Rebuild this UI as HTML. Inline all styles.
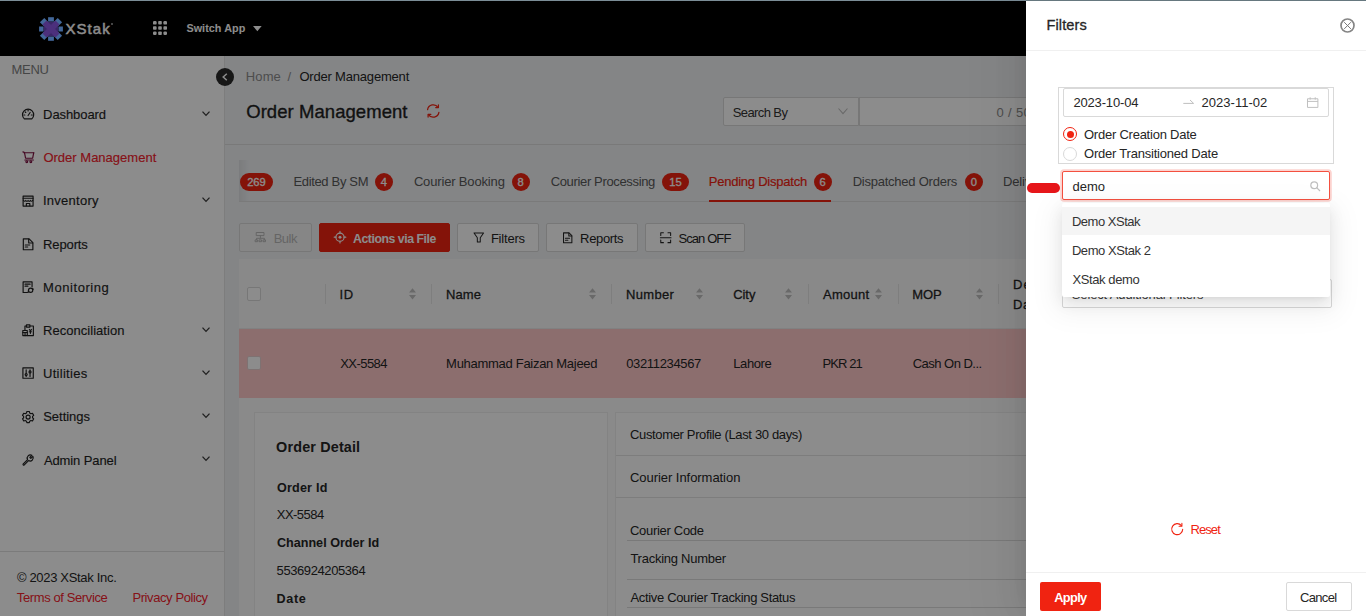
<!DOCTYPE html>
<html>
<head>
<meta charset="utf-8">
<title>Order Management</title>
<style>
*{box-sizing:border-box;margin:0;padding:0}
html,body{width:1366px;height:616px;overflow:hidden;background:#f0f2f5}
body{font-family:"Liberation Sans",sans-serif;font-size:13px;color:#262626;position:relative}
.abs{position:absolute}
.t{position:absolute;white-space:pre;line-height:16px}
svg{display:block;position:absolute;overflow:visible}
.badge{position:absolute;height:18px;border-radius:9px;background:#f02311;color:#fff;font-size:11.2px;line-height:18px;text-align:center;top:173px;-webkit-text-stroke:.3px #fff}
.btn{position:absolute;top:223.2px;height:28.7px;border:1px solid #d9d9d9;border-radius:2px;background:#fff}
</style>
</head>
<body>
<div class="abs" style="left:224px;top:56px;width:1142px;height:560px;background:#f0f2f5"></div>
<div class="t" style="left:245.7px;top:68.5px;font-size:13px;font-weight:400;color:#8c8c8c;letter-spacing:0.16px;">Home</div>
<div class="t" style="left:287.4px;top:68.5px;font-size:13px;font-weight:400;color:#8c8c8c;letter-spacing:1.30px;">/</div>
<div class="t" style="left:299.4px;top:68.5px;font-size:13px;font-weight:400;color:#262626;letter-spacing:-0.19px;">Order Management</div>
<div class="t" style="left:246.2px;top:103.6px;font-size:18.5px;font-weight:400;color:#1f1f1f;letter-spacing:0.06px;-webkit-text-stroke:.35px #1f1f1f;">Order Management</div>
<svg style="left:426px;top:104px" width="14.5" height="14" viewBox="0 0 14.5 14"><g stroke="#f02311" stroke-width="1.25" fill="none" stroke-linecap="round" stroke-linejoin="round"><path d="M1.6 5.6A5.7 5.7 0 0 1 12 3.4"/><path d="M12.4 .9V3.6H9.7"/><path d="M12.9 8.4A5.7 5.7 0 0 1 2.5 10.6"/><path d="M2.1 13.1V10.4H4.8"/></g></svg>
<div class="abs" style="left:723px;top:97px;width:135.6px;height:28.6px;background:#fff;border:1px solid #d9d9d9;border-radius:2px 0 0 2px"></div>
<div class="t" style="left:732.8px;top:104.8px;font-size:13px;font-weight:400;color:#333;letter-spacing:-0.61px;">Search By</div>
<svg style="left:838.4px;top:108px" width="10" height="6.4" viewBox="0 0 10 6.4"><path d="M.5 .5L5 5.6L9.5 .5" stroke="#bfbfbf" stroke-width="1.1" fill="none"/></svg>
<div class="abs" style="left:859px;top:97px;width:200px;height:28.6px;background:#fff;border:1px solid #d9d9d9"></div>
<div class="t" style="left:996.6px;top:104.8px;font-size:13px;font-weight:400;color:#8c8c8c;letter-spacing:0.31px;">0 / 50</div>
<div class="abs" style="left:225px;top:144px;width:1141px;height:1px;background:#dcdcdc"></div>
<div class="abs" style="left:239px;top:160px;width:1127px;height:41.8px;border-bottom:1px solid #dedede"></div>
<div class="abs" style="left:239px;top:160px;width:10px;height:41px;background:linear-gradient(90deg,rgba(0,0,0,.07),rgba(0,0,0,0))"></div>
<div class="t" style="left:293.4px;top:173.5px;font-size:13px;font-weight:400;color:#595959;letter-spacing:-0.33px;">Edited By SM</div>
<div class="t" style="left:413.9px;top:173.5px;font-size:13px;font-weight:400;color:#595959;letter-spacing:-0.16px;">Courier Booking</div>
<div class="t" style="left:550.7px;top:173.5px;font-size:13px;font-weight:400;color:#595959;letter-spacing:-0.35px;">Courier Processing</div>
<div class="t" style="left:708.7px;top:173.5px;font-size:13px;font-weight:400;color:#f02311;letter-spacing:-0.23px;-webkit-text-stroke:.2px;">Pending Dispatch</div>
<div class="t" style="left:852.7px;top:173.5px;font-size:13px;font-weight:400;color:#595959;letter-spacing:-0.24px;">Dispatched Orders</div>
<div class="t" style="left:1002.9px;top:173.5px;font-size:13px;font-weight:400;color:#595959;letter-spacing:-0.10px;">Delivered</div>
<div class="badge" style="left:240.4px;width:32.2px">269</div>
<div class="badge" style="left:374.7px;width:18.2px">4</div>
<div class="badge" style="left:511.6px;width:18.2px">8</div>
<div class="badge" style="left:662.4px;width:26.3px">15</div>
<div class="badge" style="left:813.6px;width:18.2px">6</div>
<div class="badge" style="left:964.7px;width:18.2px">0</div>
<div class="abs" style="left:709px;top:199.7px;width:122.4px;height:2px;background:#f02311"></div>
<div class="btn" style="left:239.3px;width:72.4px;background:#f5f5f5"></div>
<div class="btn" style="left:319.1px;width:131px;background:#f02311;border-color:#f02311"></div>
<div class="btn" style="left:457.3px;width:81.3px;"></div>
<div class="btn" style="left:546.4px;width:91.2px;"></div>
<div class="btn" style="left:645.2px;width:99.7px;"></div>
<svg style="left:255px;top:232px" width="11" height="10.2" viewBox="0 0 11 10.2"><g stroke="#b8b8b8" stroke-width="1" fill="none" stroke-linecap="round" stroke-linejoin="round"><path d="M1.6 .5H9V3.6H1.6Z"/><path d="M5.4 3.6V6.3M1.5 7.8V6.3H9.5V7.8"/><path d="M.5 7.9H2.6V9.7H.5ZM4.4 7.9H6.5V9.7H4.4ZM8.4 7.9H10.5V9.7H8.4Z"/></g></svg>
<div class="t" style="left:273.7px;top:231.1px;font-size:13px;font-weight:400;color:#b8b8b8;letter-spacing:-0.52px;">Bulk</div>
<svg style="left:334px;top:231.3px" width="12" height="12.4" viewBox="0 0 12 12.4"><g stroke="#fff" stroke-width="1.15" fill="none" stroke-linecap="round" stroke-linejoin="round"><circle cx="6" cy="6.2" r="4.1"/><path d="M6 .4V2.1M6 10.3V12M.2 6.2H1.9M10.1 6.2H11.8"/></g><circle cx="6" cy="6.2" r="1.5" fill="#fff"/></svg>
<div class="t" style="left:353.0px;top:231.3px;font-size:12.3px;font-weight:700;color:#fff;letter-spacing:-0.46px;">Actions via File</div>
<svg style="left:472.7px;top:232px" width="11.6" height="11" viewBox="0 0 12 12"><g stroke="#262626" stroke-width="1.1" fill="none" stroke-linecap="round" stroke-linejoin="round"><path d="M.8 1H11.2L7.6 6.2V11H4.4V6.2Z"/></g></svg>
<div class="t" style="left:490.9px;top:231.1px;font-size:13px;font-weight:400;color:#262626;letter-spacing:-0.21px;">Filters</div>
<svg style="left:561.6px;top:231.6px" width="11.4" height="11.6" viewBox="0 0 12 12"><g stroke="#262626" stroke-width="1.1" fill="none" stroke-linecap="round" stroke-linejoin="round"><path d="M1.6 .8H7.4L10.4 3.8V11.2H1.6Z"/><path d="M7.2 1V4H10.2"/><path d="M3.6 6.4H8M3.6 8.6H6.2"/></g></svg>
<div class="t" style="left:580.1px;top:231.1px;font-size:13px;font-weight:400;color:#262626;letter-spacing:-0.34px;">Reports</div>
<svg style="left:660px;top:231.6px" width="11.4" height="11.4" viewBox="0 0 12 12"><g stroke="#262626" stroke-width="1.1" fill="none" stroke-linecap="round" stroke-linejoin="round"><path d="M.8 3.6V.8H3.6M8.4 .8H11.2V3.6M11.2 8.4V11.2H8.4M3.6 11.2H.8V8.4M.4 6H11.6"/></g></svg>
<div class="t" style="left:678.4px;top:231.1px;font-size:13px;font-weight:400;color:#262626;letter-spacing:-0.90px;">Scan OFF</div>
<div class="abs" style="left:239px;top:259px;width:1127px;height:70px;background:#fafafa;border-bottom:1px solid #ececec"></div>
<div class="abs" style="left:239px;top:329px;width:1127px;height:69px;background:#ffc9c9"></div>
<div class="abs" style="left:239px;top:398px;width:1127px;height:218px;background:#fbfbfb"></div>
<div class="abs" style="left:247px;top:287px;width:14px;height:14px;background:#fff;border:1px solid #d9d9d9;border-radius:2px"></div>
<div class="abs" style="left:247px;top:356px;width:14px;height:14px;background:#fff;border:1px solid #e6d0d0;border-radius:2px"></div>
<div class="abs" style="left:325.0px;top:284px;width:1px;height:20px;background:#e6e6e6"></div>
<div class="abs" style="left:431.0px;top:284px;width:1px;height:20px;background:#e6e6e6"></div>
<div class="abs" style="left:611.0px;top:284px;width:1px;height:20px;background:#e6e6e6"></div>
<div class="abs" style="left:808.1px;top:284px;width:1px;height:20px;background:#e6e6e6"></div>
<div class="abs" style="left:897.9px;top:284px;width:1px;height:20px;background:#e6e6e6"></div>
<div class="abs" style="left:998.0px;top:284px;width:1px;height:20px;background:#e6e6e6"></div>
<div class="t" style="left:339.5px;top:286.7px;font-size:13px;font-weight:400;color:#262626;letter-spacing:0.53px;-webkit-text-stroke:.28px #262626;">ID</div>
<div class="t" style="left:446.1px;top:286.7px;font-size:13px;font-weight:400;color:#262626;letter-spacing:0.06px;-webkit-text-stroke:.28px #262626;">Name</div>
<div class="t" style="left:625.9px;top:286.7px;font-size:13px;font-weight:400;color:#262626;letter-spacing:0.35px;-webkit-text-stroke:.28px #262626;">Number</div>
<div class="t" style="left:733.2px;top:286.7px;font-size:13px;font-weight:400;color:#262626;letter-spacing:-0.05px;-webkit-text-stroke:.28px #262626;">City</div>
<div class="t" style="left:823.0px;top:286.7px;font-size:13px;font-weight:400;color:#262626;letter-spacing:0.27px;-webkit-text-stroke:.28px #262626;">Amount</div>
<div class="t" style="left:912.3px;top:286.7px;font-size:13px;font-weight:400;color:#262626;letter-spacing:-0.07px;-webkit-text-stroke:.28px #262626;">MOP</div>
<div class="t" style="left:1012.9px;top:276.5px;font-size:13px;font-weight:400;color:#262626;letter-spacing:1.10px;-webkit-text-stroke:.28px #262626;">De</div>
<div class="t" style="left:1012.9px;top:296.5px;font-size:13px;font-weight:400;color:#262626;letter-spacing:0.65px;-webkit-text-stroke:.28px #262626;">Da</div>
<svg style="left:409.2px;top:287.8px" width="7" height="11.6" viewBox="0 0 7 11.6"><path d="M0 4.6L3.5 .2L7 4.6Z M0 7L3.5 11.4L7 7Z" fill="#bfbfbf"/></svg>
<svg style="left:589.3px;top:287.8px" width="7" height="11.6" viewBox="0 0 7 11.6"><path d="M0 4.6L3.5 .2L7 4.6Z M0 7L3.5 11.4L7 7Z" fill="#bfbfbf"/></svg>
<svg style="left:696px;top:287.8px" width="7" height="11.6" viewBox="0 0 7 11.6"><path d="M0 4.6L3.5 .2L7 4.6Z M0 7L3.5 11.4L7 7Z" fill="#bfbfbf"/></svg>
<svg style="left:785.2px;top:287.8px" width="7" height="11.6" viewBox="0 0 7 11.6"><path d="M0 4.6L3.5 .2L7 4.6Z M0 7L3.5 11.4L7 7Z" fill="#bfbfbf"/></svg>
<svg style="left:875.4px;top:287.8px" width="7" height="11.6" viewBox="0 0 7 11.6"><path d="M0 4.6L3.5 .2L7 4.6Z M0 7L3.5 11.4L7 7Z" fill="#bfbfbf"/></svg>
<svg style="left:976.4px;top:287.8px" width="7" height="11.6" viewBox="0 0 7 11.6"><path d="M0 4.6L3.5 .2L7 4.6Z M0 7L3.5 11.4L7 7Z" fill="#bfbfbf"/></svg>
<div class="t" style="left:340.2px;top:355.5px;font-size:13px;font-weight:400;color:#262626;letter-spacing:-0.54px;">XX-5584</div>
<div class="t" style="left:446.1px;top:355.5px;font-size:13px;font-weight:400;color:#262626;letter-spacing:-0.29px;">Muhammad Faizan Majeed</div>
<div class="t" style="left:626.2px;top:355.5px;font-size:13px;font-weight:400;color:#262626;letter-spacing:-0.34px;">03211234567</div>
<div class="t" style="left:733.3px;top:355.5px;font-size:13px;font-weight:400;color:#262626;letter-spacing:-0.41px;">Lahore</div>
<div class="t" style="left:822.4px;top:355.5px;font-size:13px;font-weight:400;color:#262626;letter-spacing:-0.90px;">PKR 21</div>
<div class="t" style="left:912.7px;top:355.5px;font-size:13px;font-weight:400;color:#262626;letter-spacing:-0.52px;">Cash On D...</div>
<div class="abs" style="left:254px;top:412px;width:354px;height:220px;background:#fff;border:1px solid #efefef"></div>
<div class="abs" style="left:615px;top:412px;width:760px;height:220px;background:#fff;border:1px solid #efefef"></div>
<div class="t" style="left:276.1px;top:439.0px;font-size:14.4px;font-weight:700;color:#262626;letter-spacing:0.15px;">Order Detail</div>
<div class="t" style="left:276.9px;top:479.5px;font-size:12.6px;font-weight:700;color:#262626;letter-spacing:0.21px;">Order Id</div>
<div class="t" style="left:276.8px;top:506.8px;font-size:13px;font-weight:400;color:#262626;letter-spacing:-0.54px;">XX-5584</div>
<div class="t" style="left:276.9px;top:535.2px;font-size:12.6px;font-weight:700;color:#262626;letter-spacing:0.01px;">Channel Order Id</div>
<div class="t" style="left:276.6px;top:563.2px;font-size:13px;font-weight:400;color:#262626;letter-spacing:-0.41px;">5536924205364</div>
<div class="t" style="left:276.5px;top:591.3px;font-size:12.6px;font-weight:700;color:#262626;letter-spacing:0.67px;">Date</div>
<div class="t" style="left:630.0px;top:427.3px;font-size:13px;font-weight:400;color:#262626;letter-spacing:-0.35px;">Customer Profile (Last 30 days)</div>
<div class="abs" style="left:616px;top:455px;width:750px;height:1px;background:#e4e4e4"></div>
<div class="t" style="left:630.0px;top:470.1px;font-size:13px;font-weight:400;color:#262626;letter-spacing:-0.05px;">Courier Information</div>
<div class="abs" style="left:616px;top:497.3px;width:750px;height:1px;background:#e4e4e4"></div>
<div class="t" style="left:630.0px;top:523.2px;font-size:13px;font-weight:400;color:#262626;letter-spacing:-0.30px;">Courier Code</div>
<div class="abs" style="left:627px;top:540.3px;width:740px;height:1px;background:#dcdcdc"></div>
<div class="t" style="left:630.4px;top:550.5px;font-size:13px;font-weight:400;color:#262626;letter-spacing:-0.25px;">Tracking Number</div>
<div class="abs" style="left:627px;top:579.3px;width:740px;height:1px;background:#dcdcdc"></div>
<div class="t" style="left:630.5px;top:589.5px;font-size:13px;font-weight:400;color:#262626;letter-spacing:-0.34px;">Active Courier Tracking Status</div>
<div class="abs" style="left:627px;top:607px;width:740px;height:1px;background:#dcdcdc"></div>
<div class="abs" style="left:0px;top:56px;width:225px;height:560px;background:#fff;border-right:1px solid #e4e4e4"></div>
<div class="t" style="left:11.6px;top:62.3px;font-size:13px;font-weight:400;color:#808080;letter-spacing:-0.33px;">MENU</div>
<svg style="left:22.3px;top:108.1px" width="12.2" height="12.2" viewBox="0 0 12 12"><g stroke="#1f1f1f" stroke-width="1.15" fill="none" stroke-linecap="round" stroke-linejoin="round"><path d="M2.3 10.7A5.5 5.5 0 1 1 9.7 10.7Z"/><path d="M6 7.4L8 4.4"/><path d="M6 2v.9M1.9 6.9h.9M9.2 6.9h.9M3.1 3.8l.6.6"/></g></svg>
<div class="t" style="left:43.1px;top:107.4px;font-size:13px;font-weight:400;color:#1f1f1f;letter-spacing:-0.08px;-webkit-text-stroke:.15px;">Dashboard</div>
<svg style="left:201.5px;top:110.6px" width="8" height="5.4" viewBox="0 0 8 5.4"><path d="M.5 .6L4 4.4L7.5 .6" stroke="#3a3a3a" stroke-width="1.3" fill="none"/></svg>
<svg style="left:22.3px;top:151.3px" width="12.2" height="12.2" viewBox="0 0 12 12"><g stroke="#7d0f40" stroke-width="1.15" fill="none" stroke-linecap="round" stroke-linejoin="round"><path d="M.9 .9L2.1 1.3"/><path d="M1.9 1.7H11.7"/><path d="M2.5 1.9L3.5 7.1H10.5L11.5 1.9"/><path d="M2.8 8.9H11.2"/><circle cx="4.7" cy="10.5" r=".9"/><circle cx="8.7" cy="10.5" r=".9"/></g></svg>
<div class="t" style="left:43.4px;top:149.6px;font-size:13px;font-weight:400;color:#f5222d;letter-spacing:0.01px;-webkit-text-stroke:.15px;">Order Management</div>
<svg style="left:22.3px;top:194.5px" width="12.2" height="12.2" viewBox="0 0 12 12"><g stroke="#1f1f1f" stroke-width="1.15" fill="none" stroke-linecap="round" stroke-linejoin="round" stroke-width="1.3"><path d="M1.1 1.1H10.9V10.9H1.1Z"/><path d="M1.1 3.2H10.9"/><path d="M1.4 5.2Q2.6 7 3.7 5.4Q4.9 7 6 5.4Q7.1 7 8.3 5.4Q9.4 7 10.6 5.2"/><path d="M4.3 10.6V8.4H7.7V10.6"/></g></svg>
<div class="t" style="left:42.9px;top:192.8px;font-size:13px;font-weight:400;color:#1f1f1f;letter-spacing:0.27px;-webkit-text-stroke:.15px;">Inventory</div>
<svg style="left:201.5px;top:197.0px" width="8" height="5.4" viewBox="0 0 8 5.4"><path d="M.5 .6L4 4.4L7.5 .6" stroke="#3a3a3a" stroke-width="1.3" fill="none"/></svg>
<svg style="left:22.3px;top:237.7px" width="12.2" height="12.2" viewBox="0 0 12 12"><g stroke="#1f1f1f" stroke-width="1.15" fill="none" stroke-linecap="round" stroke-linejoin="round" stroke-width="1.2"><path d="M1.3 .8H7L10.7 4.5V11.6H1.3Z"/><path d="M6.6 1V4.9H10.5"/><path d="M3.2 6.9H7.6M3.2 8.9H5.6"/></g></svg>
<div class="t" style="left:43.1px;top:237.0px;font-size:13px;font-weight:400;color:#1f1f1f;letter-spacing:-0.13px;-webkit-text-stroke:.15px;">Reports</div>
<svg style="left:22.3px;top:280.9px" width="12.2" height="12.2" viewBox="0 0 12 12"><g stroke="#1f1f1f" stroke-width="1.15" fill="none" stroke-linecap="round" stroke-linejoin="round"><path d="M5.4 11.3H1.1V.9H9.9V5.6"/><path d="M3 3.1H8M3 5.1H5.8"/><circle cx="8.5" cy="9.1" r="2.1"/><path d="M10.9 8.2L10.6 7.2M6.1 10L6.4 11"/></g></svg>
<div class="t" style="left:43.1px;top:280.2px;font-size:13px;font-weight:400;color:#1f1f1f;letter-spacing:0.55px;-webkit-text-stroke:.15px;">Monitoring</div>
<svg style="left:22.3px;top:324.1px" width="12.2" height="12.2" viewBox="0 0 12 12"><g stroke="#1f1f1f" stroke-width="1.15" fill="none" stroke-linecap="round" stroke-linejoin="round"><path d="M4.4 2H2.9V6.2M7.8 2H11.2V11.4H5.4"/><path d="M4.4 .9H7.8V3H4.4Z"/><path d="M.8 6.4H5.2V11.4H.8Z"/><path d="M.8 8.4H5.2M3 8.4V11.4"/><path d="M7.3 5.4L8.3 6.8L9.3 5.4M8.3 6.8V9.2M7.3 7.6H9.3"/></g></svg>
<div class="t" style="left:43.1px;top:323.4px;font-size:13px;font-weight:400;color:#1f1f1f;letter-spacing:0.03px;-webkit-text-stroke:.15px;">Reconciliation</div>
<svg style="left:201.5px;top:326.6px" width="8" height="5.4" viewBox="0 0 8 5.4"><path d="M.5 .6L4 4.4L7.5 .6" stroke="#3a3a3a" stroke-width="1.3" fill="none"/></svg>
<svg style="left:22.3px;top:367.3px" width="12.2" height="12.2" viewBox="0 0 12 12"><g stroke="#1f1f1f" stroke-width="1.15" fill="none" stroke-linecap="round" stroke-linejoin="round"><path d="M.9 .9H11.1V11.1H.9Z"/><path d="M4.1 2.7V9.3M7.9 2.7V9.3"/><circle cx="4.1" cy="7.4" r="1" fill="#fff"/><circle cx="7.9" cy="4.8" r="1" fill="#fff"/></g></svg>
<div class="t" style="left:43.0px;top:365.6px;font-size:13px;font-weight:400;color:#1f1f1f;letter-spacing:0.29px;-webkit-text-stroke:.15px;">Utilities</div>
<svg style="left:201.5px;top:369.8px" width="8" height="5.4" viewBox="0 0 8 5.4"><path d="M.5 .6L4 4.4L7.5 .6" stroke="#3a3a3a" stroke-width="1.3" fill="none"/></svg>
<svg style="left:22.3px;top:410.5px" width="12.2" height="12.2" viewBox="0 0 12 12"><g stroke="#1f1f1f" stroke-width="1.15" fill="none" stroke-linecap="round" stroke-linejoin="round"><path d="M4.8 .5H7.2L7.6 2L8.8 2.7L10.3 2.2L11.5 4.3L10.4 5.3V6.7L11.5 7.7L10.3 9.8L8.8 9.3L7.6 10L7.2 11.5H4.8L4.4 10L3.2 9.3L1.7 9.8L.5 7.7L1.6 6.7V5.3L.5 4.3L1.7 2.2L3.2 2.7L4.4 2Z"/><circle cx="6" cy="6" r="2"/></g></svg>
<div class="t" style="left:43.2px;top:408.8px;font-size:13px;font-weight:400;color:#1f1f1f;letter-spacing:-0.02px;-webkit-text-stroke:.15px;">Settings</div>
<svg style="left:201.5px;top:413.0px" width="8" height="5.4" viewBox="0 0 8 5.4"><path d="M.5 .6L4 4.4L7.5 .6" stroke="#3a3a3a" stroke-width="1.3" fill="none"/></svg>
<svg style="left:22.3px;top:453.7px" width="12.2" height="12.2" viewBox="0 0 12 12"><g stroke="#1f1f1f" stroke-width="1.15" fill="none" stroke-linecap="round" stroke-linejoin="round"><path d="M1 10L5.5 5.5A3.1 3.1 0 0 1 9.7 1.3L7.7 3.3L8.7 4.3L10.7 2.3A3.1 3.1 0 0 1 6.5 6.5L2 11Q1.2 11.4 1 10Z"/></g></svg>
<div class="t" style="left:43.9px;top:453.0px;font-size:13px;font-weight:400;color:#1f1f1f;letter-spacing:-0.10px;-webkit-text-stroke:.15px;">Admin Panel</div>
<svg style="left:201.5px;top:456.2px" width="8" height="5.4" viewBox="0 0 8 5.4"><path d="M.5 .6L4 4.4L7.5 .6" stroke="#3a3a3a" stroke-width="1.3" fill="none"/></svg>
<div class="abs" style="left:0px;top:551px;width:224px;height:1px;background:#e0e0e0"></div>
<div class="t" style="left:16.9px;top:570.2px;font-size:13px;font-weight:400;color:#262626;letter-spacing:-0.32px;">© 2023 XStak Inc.</div>
<div class="t" style="left:16.8px;top:590.2px;font-size:13px;font-weight:400;color:#f5222d;letter-spacing:-0.39px;">Terms of Service</div>
<div class="t" style="left:132.4px;top:590.2px;font-size:13px;font-weight:400;color:#f5222d;letter-spacing:-0.40px;">Privacy Policy</div>
<div class="abs" style="left:216px;top:68px;width:18px;height:18px;border-radius:9px;background:#2b2b2b"></div>
<svg style="left:221.6px;top:73px" width="6" height="8" viewBox="0 0 6 8"><path d="M4.8 .8L1.2 4L4.8 7.2" stroke="#fff" stroke-width="1.5" fill="none"/></svg>
<div class="abs" style="left:0px;top:1px;width:1366px;height:55px;background:#000"></div>
<div class="t" style="left:65.5px;top:20.5px;font-size:15px;font-weight:400;color:#fff;letter-spacing:1.05px;-webkit-text-stroke:.45px #fff;">XStak</div>
<div class="abs" style="left:111px;top:23px;width:1.5px;height:1.5px;background:#aaa;border-radius:1px"></div>
<svg style="left:153px;top:21px" width="14" height="14" viewBox="0 0 14 14" fill="#fff">
<rect x="0" y="0" width="3.6" height="3.6" rx="1.2"/><rect x="5.2" y="0" width="3.6" height="3.6" rx=".8"/><rect x="10.4" y="0" width="3.6" height="3.6" rx="1.2"/>
<rect x="0" y="5.2" width="3.6" height="3.6" rx=".8"/><rect x="5.2" y="5.2" width="3.6" height="3.6" rx=".8"/><rect x="10.4" y="5.2" width="3.6" height="3.6" rx=".8"/>
<rect x="0" y="10.4" width="3.6" height="3.6" rx="1.2"/><rect x="5.2" y="10.4" width="3.6" height="3.6" rx=".8"/><rect x="10.4" y="10.4" width="3.6" height="3.6" rx="1.2"/>
</svg>
<div class="t" style="left:186.4px;top:20.0px;font-size:10.8px;font-weight:700;color:#fff;letter-spacing:0.05px;">Switch App</div>
<svg style="left:253.3px;top:25.9px" width="8.7" height="5.2" viewBox="0 0 8.7 5.2"><path d="M0 0H8.7L4.35 5.2Z" fill="#fff"/></svg>
<div class="abs" style="left:0px;top:0px;width:1366px;height:616px;background:rgba(0,0,0,.45)"></div>
<div class="abs" style="left:0px;top:0px;width:1366px;height:1px;background:#7b8d97"></div>
<svg style="left:39.3px;top:16.5px" width="24" height="24" viewBox="-12 -12 24 24">
<g fill="#426799">
<rect x="-2.9" y="-11.8" width="5.8" height="4.4"/><rect x="-2.9" y="7.4" width="5.8" height="4.4"/>
<rect x="-11.9" y="-2.5" width="4.5" height="5"/><rect x="7.4" y="-2.5" width="4.5" height="5"/>
<g transform="rotate(45)"><rect x="-3.1" y="-12.6" width="6.2" height="6"/><rect x="-3.1" y="6.6" width="6.2" height="6"/>
<rect x="-12.6" y="-3.1" width="6" height="6.2"/><rect x="6.6" y="-3.1" width="6" height="6.2"/></g>
</g>
<circle r="7.5" fill="#3a2766"/>
<g transform="rotate(45)" fill="#4c307c"><rect x="-2.9" y="-9.2" width="5.8" height="18.4"/><rect x="-9.2" y="-2.9" width="18.4" height="5.8"/></g>
</svg>
<div class="abs" style="left:1026px;top:0px;width:340px;height:616px;background:#fff;box-shadow:-6px 0 16px -8px rgba(0,0,0,.08),-9px 0 28px 0 rgba(0,0,0,.05),-12px 0 48px 16px rgba(0,0,0,.03)"></div>
<div class="abs" style="left:1026px;top:0px;width:340px;height:1px;background:#66787f"></div>
<div class="abs" style="left:1027.4px;top:183.4px;width:32.5px;height:10.1px;border-radius:5.1px;background:#e6161a"></div>
<div class="t" style="left:1046.4px;top:17.3px;font-size:14.6px;font-weight:400;color:#262626;letter-spacing:0.12px;-webkit-text-stroke:.3px #262626;">Filters</div>
<svg style="left:1339.8px;top:18px" width="15" height="15" viewBox="0 0 15 15"><g fill="none" stroke-linecap="round"><circle cx="7.5" cy="7.5" r="6.5" stroke="#858585" stroke-width="1.7"/><path d="M4.5 4.5L10.6 10.6M10.6 4.5L4.5 10.6" stroke="#777" stroke-width="1"/></g></svg>
<div class="abs" style="left:1026px;top:50px;width:340px;height:1px;background:#f0f0f0"></div>
<div class="abs" style="left:1058px;top:87px;width:276px;height:76.5px;border:1px solid #d9d9d9"></div>
<div class="abs" style="left:1063px;top:88px;width:265.6px;height:28.5px;border:1px solid #d9d9d9;border-radius:2px"></div>
<div class="t" style="left:1073.4px;top:94.5px;font-size:13px;font-weight:400;color:#262626;letter-spacing:-0.16px;">2023-10-04</div>
<svg style="left:1182.6px;top:98.6px" width="11" height="5" viewBox="0 0 11 5"><path d="M.3 4.4H10.6L7 1" stroke="#bfbfbf" stroke-width="1" fill="none"/></svg>
<div class="t" style="left:1201.6px;top:94.5px;font-size:13px;font-weight:400;color:#262626;letter-spacing:0.01px;">2023-11-02</div>
<svg style="left:1307px;top:96.6px" width="11.4" height="11" viewBox="0 0 11.6 11"><g stroke="#bfbfbf" stroke-width="1" fill="none"><path d="M.5 1.7H11.1V10.5H.5Z"/><path d="M.5 4.4H11.1M3.2 .2V2.6M8.4 .2V2.6"/></g></svg>
<div class="abs" style="left:1063px;top:127px;width:14.4px;height:14.4px;border-radius:50%;border:1px solid #f02311;background:#fff"></div>
<div class="abs" style="left:1066.6px;top:130.6px;width:7.2px;height:7.2px;border-radius:50%;background:#f02311"></div>
<div class="t" style="left:1084.0px;top:126.5px;font-size:13px;font-weight:400;color:#262626;letter-spacing:-0.24px;">Order Creation Date</div>
<div class="abs" style="left:1063px;top:146.5px;width:14.4px;height:14.4px;border-radius:50%;border:1px solid #d9d9d9;background:#fff"></div>
<div class="t" style="left:1084.0px;top:145.9px;font-size:13px;font-weight:400;color:#262626;letter-spacing:-0.21px;">Order Transitioned Date</div>
<div class="abs" style="left:1062.4px;top:279px;width:269.2px;height:28.5px;border:1px solid #d9d9d9;border-radius:2px"></div>
<div class="t" style="left:1071.8px;top:286.5px;font-size:13px;font-weight:400;color:#404040;letter-spacing:-0.14px;">Select Additional Filters</div>
<div class="abs" style="left:1062px;top:171px;width:268px;height:28.6px;border:1px solid #f4503f;border-radius:2px;box-shadow:0 0 0 1.8px rgba(240,35,17,.2);background:#fff"></div>
<div class="t" style="left:1072.5px;top:178.9px;font-size:13px;font-weight:400;color:#262626;letter-spacing:0.02px;">demo</div>
<svg style="left:1309.5px;top:181px" width="10.5" height="10.5" viewBox="0 0 10.5 10.5"><g stroke="#bfbfbf" stroke-width="1.2" fill="none"><circle cx="4.2" cy="4.2" r="3.4"/><path d="M6.7 6.7L10 10"/></g></svg>
<div class="abs" style="left:1062px;top:203.4px;width:268px;height:93.6px;background:#fff;border-radius:2px;box-shadow:0 3px 6px -4px rgba(0,0,0,.12),0 6px 16px 0 rgba(0,0,0,.08),0 9px 28px 8px rgba(0,0,0,.05)"></div>
<div class="abs" style="left:1062px;top:207px;width:268px;height:28.4px;background:#f5f5f5"></div>
<div class="t" style="left:1071.9px;top:213.7px;font-size:13px;font-weight:400;color:#333;letter-spacing:-0.48px;">Demo XStak</div>
<div class="t" style="left:1071.9px;top:242.5px;font-size:13px;font-weight:400;color:#333;letter-spacing:-0.42px;">Demo XStak 2</div>
<div class="t" style="left:1072.4px;top:271.5px;font-size:13px;font-weight:400;color:#333;letter-spacing:-0.39px;">XStak demo</div>
<svg style="left:1171.3px;top:523.4px" width="12.4" height="12.4" viewBox="0 0 12.4 12.4"><g stroke="#f02311" stroke-width="1.1" fill="none" stroke-linecap="round" stroke-linejoin="round"><path d="M10.4 2.6A5.5 5.5 0 1 0 11.7 6.2"/><path d="M10.9 .4V3.2H8.1"/></g></svg>
<div class="t" style="left:1190.4px;top:521.8px;font-size:13px;font-weight:400;color:#f02311;letter-spacing:-0.90px;">Reset</div>
<div class="abs" style="left:1026px;top:572px;width:340px;height:1px;background:#f0f0f0"></div>
<div class="abs" style="left:1040px;top:582px;width:61px;height:29px;background:#f02311;border-radius:2px"></div>
<div class="t" style="left:1054.3px;top:590.0px;font-size:12.8px;font-weight:700;color:#fff;letter-spacing:-0.68px;">Apply</div>
<div class="abs" style="left:1286.3px;top:582.3px;width:65.3px;height:28.5px;background:#fff;border:1px solid #d9d9d9;border-radius:2px"></div>
<div class="t" style="left:1300.1px;top:589.8px;font-size:13px;font-weight:400;color:#262626;letter-spacing:-0.70px;">Cancel</div>
</body>
</html>
